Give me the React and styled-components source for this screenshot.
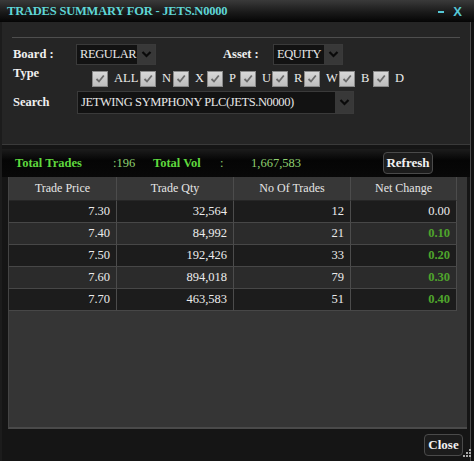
import React from "react";
import styled, { createGlobalStyle, css } from "styled-components";

const GlobalStyle = createGlobalStyle`
  html, body {
    margin: 0;
    padding: 0;
    background: #101010;
  }
  body {
    font-family: "Liberation Serif", "Times New Roman", serif;
  }
`;

const Window = styled.div`
  width: 474px;
  height: 461px;
  display: flex;
  flex-direction: column;
  background: #101010;
  overflow: hidden;
`;

const TitleBar = styled.div`
  height: 22px;
  flex: none;
  display: flex;
  align-items: center;
  justify-content: space-between;
  padding: 0 12px 0 7px;
  background: linear-gradient(#3a3a3a, #1a1a1a 55%, #050505);
`;

const Title = styled.div`
  color: #5fd6d6;
  font-weight: bold;
  font-size: 12.5px;
  letter-spacing: -0.2px;
`;

const WinButtons = styled.div`
  display: flex;
  align-items: center;
  gap: 9px;
  color: #55c8d6;
  font-family: "Liberation Sans", Arial, sans-serif;
  font-weight: bold;
  font-size: 13px;
`;

const Minimize = styled.span`
  display: block;
  width: 6px;
  height: 2px;
  background: #55c8d6;
  margin-top: 1px;
`;

const Body = styled.div`
  flex: 1;
  display: flex;
  flex-direction: column;
  border-left: 2px solid #1c1c1c;
  border-right: 1px solid #4a4a4a;
  margin-right: 3px;
  background: #151515;
`;

const FilterPanel = styled.div`
  height: 123px;
  flex: none;
  background: #252525;
  padding: 15px 12px 0 10px;
  box-sizing: border-box;
  border-bottom: 1px solid #3a3a3a;
`;

const Divider = styled.div`
  height: 1px;
  background: #4e4e4e;
  margin-right: -2px;
  margin-bottom: 4px;
`;

const Row = styled.div`
  display: flex;
  align-items: center;
  height: ${(p) => p.h || 22}px;
  padding-left: 1px;
`;

const Label = styled.div`
  color: #f0f0f0;
  font-weight: bold;
  font-size: 12.5px;
  width: ${(p) => p.w}px;
  margin-left: ${(p) => p.ml || 0}px;
  flex: none;
  ${(p) =>
    p.top &&
    css`
      align-self: flex-start;
    `}
`;

const Select = styled.div`
  display: flex;
  height: ${(p) => p.h || 21}px;
  width: ${(p) => p.w}px;
  flex: none;
  border: 1px solid #3a3a3a;
  box-sizing: border-box;
  background: #121212;
`;

const SelectText = styled.div`
  flex: 1;
  color: #e8e8e8;
  font-size: 12.5px;
  letter-spacing: -0.4px;
  line-height: ${(p) => p.lh || 19}px;
  padding-left: 3px;
  white-space: nowrap;
  overflow: hidden;
`;

const Chevron = styled.div`
  width: 18px;
  flex: none;
  background: #383838;
  display: flex;
  align-items: center;
  justify-content: center;
`;

const Checks = styled.div`
  display: flex;
  align-items: center;
`;

const Box = styled.div`
  width: 14px;
  height: 14px;
  background: linear-gradient(#d8d8d8, #bdbdbd);
  border: 1px solid #8a8a8a;
  display: flex;
  align-items: center;
  justify-content: center;
  margin-right: 6px;
  flex: none;
`;

const CheckLabel = styled.span`
  color: #ececec;
  font-size: 12.5px;
  width: ${(p) => p.w}px;
  flex: none;
`;

const StatsBar = styled.div`
  height: 28px;
  flex: none;
  display: flex;
  align-items: center;
  padding-left: 13px;
  background: linear-gradient(#1c1c1c, #050505 40%, #080808);
  margin-top: 4px;
`;

const Stat = styled.span`
  font-size: 12.5px;
  width: ${(p) => p.w}px;
  flex: none;
  color: ${(p) => (p.strong ? "#5fd83e" : "#8fd070")};
  font-weight: ${(p) => (p.strong ? "bold" : "normal")};
`;

const Button = styled.button`
  font-family: "Liberation Serif", "Times New Roman", serif;
  font-weight: bold;
  font-size: 13px;
  color: #f2f2f2;
  background: #1c1c1c;
  border: 1px solid #4a4a4a;
  border-radius: 4px;
  height: 22px;
  width: ${(p) => p.w}px;
  padding: 0;
  margin-left: ${(p) => p.ml || 0}px;
  cursor: pointer;
`;

const TableArea = styled.div`
  flex: 1;
  margin-left: 6px;
  margin-right: 3px;
  background: #353535;
  border-bottom: 2px solid #4a4a4a;
  border-left: 1px solid #444;
  display: flex;
  flex-direction: column;
`;

const Grid = styled.div`
  display: grid;
  grid-template-columns: 108px 117px 117px 106px;
  width: 448px;
`;

const Head = styled.div`
  height: 23px;
  line-height: 23px;
  text-align: center;
  color: #e6e6e6;
  font-size: 12px;
  background: #373737;
  border-right: 1px solid #4c4c4c;
  border-bottom: 1px solid #262626;
`;

const Cell = styled.div`
  height: 21px;
  line-height: 21px;
  text-align: right;
  padding-right: 6px;
  font-size: 12.5px;
  background: ${(p) => (p.odd ? "#2b2b2b" : "#1c1c1c")};
  border-right: 1px solid #4c4c4c;
  border-bottom: 1px solid #474747;
  color: ${(p) => (p.green ? "#4fa52c" : "#ececec")};
  font-weight: ${(p) => (p.green ? "bold" : "normal")};
`;

const Footer = styled.div`
  height: 32px;
  flex: none;
  display: flex;
  align-items: center;
  justify-content: flex-end;
  padding-right: 7px;
  position: relative;
`;

const Grip = styled.svg`
  position: absolute;
  right: -2px;
  bottom: 3px;
`;

const ChevronIcon = () => (
  <svg width="11" height="8" viewBox="0 0 11 8">
    <path d="M1.5 2 L5.5 6 L9.5 2" fill="none" stroke="#0a0a0a" strokeWidth="2.2" />
  </svg>
);

const Tick = () => (
  <svg width="10" height="9" viewBox="0 0 10 9">
    <path d="M1.5 5 L4 7.5 L8.8 1.5" fill="none" stroke="#6a6a6a" strokeWidth="1.8" />
  </svg>
);

const types = [
  ["ALL", 26],
  ["N", 11],
  ["X", 12],
  ["P", 11],
  ["U", 10],
  ["R", 10],
  ["W", 13],
  ["B", 12],
  ["D", 10],
];

const rows = [
  ["7.30", "32,564", "12", "0.00"],
  ["7.40", "84,992", "21", "0.10"],
  ["7.50", "192,426", "33", "0.20"],
  ["7.60", "894,018", "79", "0.30"],
  ["7.70", "463,583", "51", "0.40"],
];

export default function App() {
  return (
    <>
      <GlobalStyle />
      <Window>
        <TitleBar>
          <Title>TRADES SUMMARY FOR - JETS.N0000</Title>
          <WinButtons>
            <Minimize />
            <span>X</span>
          </WinButtons>
        </TitleBar>
        <Body>
          <FilterPanel>
            <Divider />
            <Row h={24}>
              <Label w={63}>Board :</Label>
              <Select w={80}>
                <SelectText>REGULAR</SelectText>
                <Chevron>
                  <ChevronIcon />
                </Chevron>
              </Select>
              <Label w={50} ml={67}>
                Asset :
              </Label>
              <Select w={70}>
                <SelectText>EQUITY</SelectText>
                <Chevron>
                  <ChevronIcon />
                </Chevron>
              </Select>
            </Row>
            <Row h={25}>
              <Label w={79} top>
                Type
              </Label>
              <Checks>
                {types.map(([t, w]) => (
                  <React.Fragment key={t}>
                    <Box>
                      <Tick />
                    </Box>
                    <CheckLabel w={w}>{t}</CheckLabel>
                  </React.Fragment>
                ))}
              </Checks>
            </Row>
            <Row h={22}>
              <Label w={64}>Search</Label>
              <Select w={277} h={23}>
                <SelectText lh={20}>JETWING SYMPHONY PLC(JETS.N0000)</SelectText>
                <Chevron>
                  <ChevronIcon />
                </Chevron>
              </Select>
            </Row>
          </FilterPanel>
          <StatsBar>
            <Stat strong w={98}>
              Total Trades
            </Stat>
            <Stat w={40}>:196</Stat>
            <Stat strong w={67}>
              Total Vol
            </Stat>
            <Stat w={31}>:</Stat>
            <Stat w={121}>1,667,583</Stat>
            <Button w={50} ml={11}>
              Refresh
            </Button>
          </StatsBar>
          <TableArea>
            <Grid>
              <Head>Trade Price</Head>
              <Head>Trade Qty</Head>
              <Head>No Of Trades</Head>
              <Head>Net Change</Head>
              {rows.map((r, i) =>
                r.map((v, j) => (
                  <Cell key={i + "-" + j} odd={i % 2 === 1} green={j === 3 && v !== "0.00"}>
                    {v}
                  </Cell>
                ))
              )}
            </Grid>
          </TableArea>
          <Footer>
            <Button w={39}>Close</Button>
            <Grip width="10" height="10" viewBox="0 0 10 10">
              <rect x="7" y="1" width="2" height="2" fill="#aaa" />
              <rect x="4" y="4" width="2" height="2" fill="#aaa" />
              <rect x="7" y="4" width="2" height="2" fill="#aaa" />
              <rect x="1" y="7" width="2" height="2" fill="#aaa" />
              <rect x="4" y="7" width="2" height="2" fill="#aaa" />
              <rect x="7" y="7" width="2" height="2" fill="#aaa" />
            </Grip>
          </Footer>
        </Body>
      </Window>
    </>
  );
}
